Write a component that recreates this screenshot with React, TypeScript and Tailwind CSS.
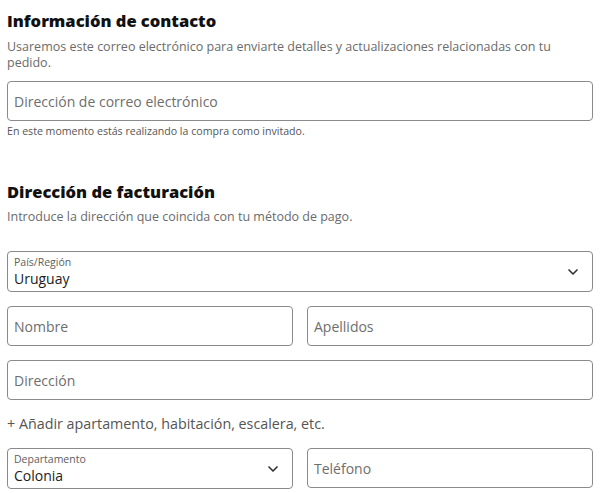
import { ChevronDown } from "lucide-react";

const TextField = ({ placeholder }: { placeholder: string }) => (
  <div className="h-10 flex items-center rounded-[4px] border border-[#8a8a8a] px-[6px] text-[14px] text-[#6e6e6e]">
    {placeholder}
  </div>
);

const SelectField = ({ label, value }: { label: string; value: string }) => (
  <div className="h-[41px] flex items-center justify-between rounded-[4px] border border-[#8a8a8a] pl-[6px] pr-[11px]">
    <div className="flex flex-col leading-none">
      <span className="text-[10.5px] text-[#5e5e5e]">{label}</span>
      <span className="mt-[5px] text-[14px] text-[#1c1c1c]">{value}</span>
    </div>
    <ChevronDown size={16} strokeWidth={2.5} className="text-[#333]" />
  </div>
);

export default function App() {
  return (
    <div className="w-[600px] h-[493px] overflow-hidden bg-white px-[7px] pt-[11px] font-['Open_Sans',sans-serif]">
      <h2 className="text-[16.5px] font-extrabold leading-[20px] text-[#111]">
        Información de contacto
      </h2>
      <p className="mt-[8px] max-w-[560px] text-[12.5px] leading-[16px] text-[#6b6b6b]">
        Usaremos este correo electrónico para enviarte detalles y actualizaciones relacionadas con tu pedido.
      </p>
      <div className="mt-[10px]">
        <TextField placeholder="Dirección de correo electrónico" />
      </div>
      <p className="mt-[4px] text-[10.6px] leading-[12px] text-[#555]">
        En este momento estás realizando la compra como invitado.
      </p>

      <h2 className="mt-[45px] text-[16.5px] font-extrabold leading-[20px] text-[#111]">
        Dirección de facturación
      </h2>
      <p className="mt-[7px] text-[12.5px] leading-[16px] text-[#6b6b6b]">
        Introduce la dirección que coincida con tu método de pago.
      </p>

      <div className="mt-[26px] flex flex-col gap-[14px]">
        <SelectField label="País/Región" value="Uruguay" />
        <div className="grid grid-cols-2 gap-[14px]">
          <TextField placeholder="Nombre" />
          <TextField placeholder="Apellidos" />
        </div>
        <TextField placeholder="Dirección" />
      </div>
      <p className="mt-[14px] text-[14.3px] leading-[20px] text-[#555]">
        + Añadir apartamento, habitación, escalera, etc.
      </p>
      <div className="mt-[14px] grid grid-cols-2 gap-[14px]">
        <SelectField label="Departamento" value="Colonia" />
        <TextField placeholder="Teléfono" />
      </div>
    </div>
  );
}
